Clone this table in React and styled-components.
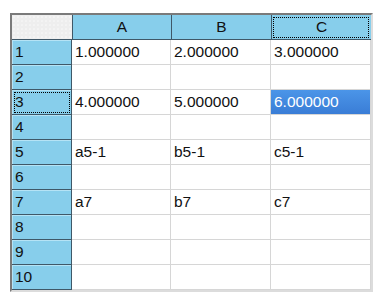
import React from "react";
import styled, { createGlobalStyle } from "styled-components";

const columns = ["A", "B", "C"];
const rows = [
  ["1.000000", "2.000000", "3.000000"],
  ["", "", ""],
  ["4.000000", "5.000000", "6.000000"],
  ["", "", ""],
  ["a5-1", "b5-1", "c5-1"],
  ["", "", ""],
  ["a7", "b7", "c7"],
  ["", "", ""],
  ["", "", ""],
  ["", "", ""],
];

const selected = { row: 2, col: 2 };

function App() {
  return (
    <Page>
      <Global />
      <Frame>
        <Corner />
        {columns.map((c, i) => (
          <ColHeader key={c} focused={i === selected.col}>
            {c}
          </ColHeader>
        ))}
        {rows.map((r, ri) => (
          <React.Fragment key={ri}>
            <RowHeader focused={ri === selected.row}>{ri + 1}</RowHeader>
            {r.map((v, ci) => (
              <Cell key={ci} active={ri === selected.row && ci === selected.col}>
                {v}
              </Cell>
            ))}
          </React.Fragment>
        ))}
      </Frame>
    </Page>
  );
}

export default App;

const Global = createGlobalStyle`
  body {
    margin: 0;
    background: #ffffff;
    font-family: "Liberation Sans", Arial, sans-serif;
  }
`;

const Page = styled.div`
  padding: 13px 0 0 10px;
`;

const Frame = styled.div`
  display: inline-grid;
  grid-template-columns: 60px 99px 100px 100px;
  grid-template-rows: 25px repeat(10, 25px);
  border-top: 2px solid #7a7a7a;
  border-left: 2px solid #7a7a7a;
  border-right: 2px solid #dcdcdc;
  border-bottom: 2px solid #dcdcdc;
  background: #ffffff;
`;

const Corner = styled.div`
  background-color: #eeeeee;
  background-image: radial-gradient(#f8f8f8 0.6px, transparent 0.8px);
  background-size: 4px 4px;
  border-bottom: 1px solid #3f5868;
`;

const ColHeader = styled.div`
  display: flex;
  align-items: center;
  justify-content: center;
  background: #87ceeb;
  border-left: 1px solid #3f5868;
  border-bottom: 1px solid #3f5868;
  font-size: 15.5px;
  color: #111;
  outline: ${(p) => (p.focused ? "1px dotted #000" : "none")};
  outline-offset: -3px;
`;

const RowHeader = styled.div`
  display: flex;
  align-items: center;
  padding-left: 3px;
  background: #87ceeb;
  border-right: 1px solid #3f5868;
  border-bottom: 1px solid #3f5868;
  box-shadow: inset 1px 1px 0 #b5e3f5;
  font-size: 15.5px;
  color: #111;
  outline: ${(p) => (p.focused ? "1px dotted #000" : "none")};
  outline-offset: -3px;
`;

const Cell = styled.div`
  display: flex;
  align-items: center;
  padding-left: 3px;
  border-right: 1px solid #d6d6d6;
  border-bottom: 1px solid #d6d6d6;
  font-size: 15.5px;
  color: ${(p) => (p.active ? "#ffffff" : "#111")};
  background: ${(p) =>
    p.active ? "linear-gradient(#4b95e8, #3a7dd6)" : "#ffffff"};
  white-space: nowrap;
  overflow: hidden;
`;
